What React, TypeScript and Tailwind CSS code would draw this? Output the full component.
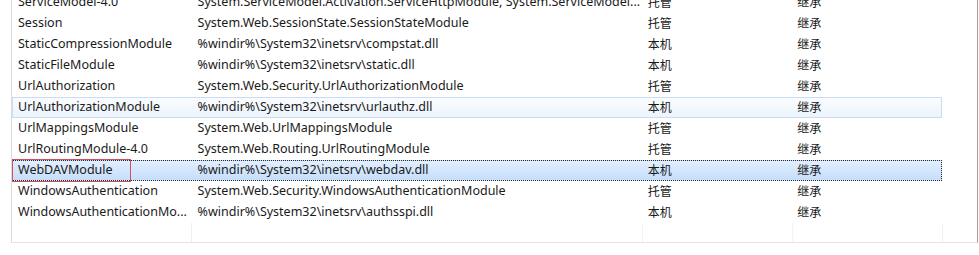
const rows: [string, string, string, string][] = [
  ["ServiceModel-4.0", "System.ServiceModel.Activation.ServiceHttpModule, System.ServiceModel...", "托管", "继承"],
  ["Session", "System.Web.SessionState.SessionStateModule", "托管", "继承"],
  ["StaticCompressionModule", "%windir%\\System32\\inetsrv\\compstat.dll", "本机", "继承"],
  ["StaticFileModule", "%windir%\\System32\\inetsrv\\static.dll", "本机", "继承"],
  ["UrlAuthorization", "System.Web.Security.UrlAuthorizationModule", "托管", "继承"],
  ["UrlAuthorizationModule", "%windir%\\System32\\inetsrv\\urlauthz.dll", "本机", "继承"],
  ["UrlMappingsModule", "System.Web.UrlMappingsModule", "托管", "继承"],
  ["UrlRoutingModule-4.0", "System.Web.Routing.UrlRoutingModule", "托管", "继承"],
  ["WebDAVModule", "%windir%\\System32\\inetsrv\\webdav.dll", "本机", "继承"],
  ["WindowsAuthentication", "System.Web.Security.WindowsAuthenticationModule", "托管", "继承"],
  ["WindowsAuthenticationMo...", "%windir%\\System32\\inetsrv\\authsspi.dll", "本机", "继承"],
];

const HOVER = 5;
const SELECTED = 8;

export default function App() {
  return (
    <div
      className="w-[979px] h-[255px] bg-white overflow-hidden text-[12.5px] text-[#1a1a1a]"
      style={{ fontFamily: '"Segoe UI", "Noto Sans", "Noto Sans CJK SC", sans-serif' }}
    >
      <div className="relative ml-[11px] w-[967px] h-[243px] border-l border-r border-b border-l-[#dcdcdc] border-r-[#a0a0a0] border-b-[#e3e3e3] flex flex-col overflow-hidden">
        <div className="flex flex-col -mt-[8px]">
          {rows.map((r, i) => {
            const state =
              i === SELECTED
                ? "bg-gradient-to-b from-[#e1eefd] to-[#c6defb] border border-dotted border-[#2a2a2a]"
                : i === HOVER
                ? "bg-gradient-to-b from-[#fafcfe] to-[#ecf4fd] border border-[#c9dcf4]"
                : "border border-transparent";
            return (
              <div key={r[0]} className="flex h-[21px]">
                <div className={`flex w-[930px] items-center ${state}`}>
                  <div className="w-[179px] pl-[5px] whitespace-nowrap">{r[0]}</div>
                  <div className="w-[451px] pl-[6px] whitespace-nowrap overflow-hidden">{r[1]}</div>
                  <div className="w-[150px] pl-[6px] text-[12px]">{r[2]}</div>
                  <div className="w-[150px] pl-[6px] text-[12px]">{r[3]}</div>
                </div>
              </div>
            );
          })}
        </div>
        <div className="flex flex-1">
          <div className="w-[180px] border-r border-[#efefef]" />
          <div className="w-[451px] border-r border-[#f2f2f2]" />
          <div className="w-[150px] border-r border-[#f2f2f2]" />
          <div className="w-[150px] border-r border-[#f2f2f2]" />
        </div>
        <div className="absolute z-10 left-0 top-[159px] w-[119px] h-[23px] border border-[#d2505e]" />
      </div>
    </div>
  );
}
